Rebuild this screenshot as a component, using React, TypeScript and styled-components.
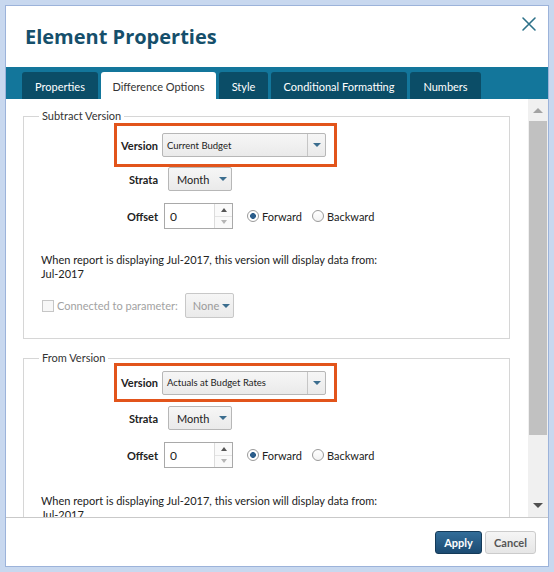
import React from 'react'
import styled, { createGlobalStyle } from 'styled-components'

const GlobalStyle = createGlobalStyle`
  html, body {
    margin: 0;
    padding: 0;
  }
  body {
    background: #c8d8ef;
    font-family: Lato, 'Open Sans', sans-serif;
    font-size: 11px;
    color: #222;
  }
`

const Dialog = styled.div`
  box-sizing: border-box;
  margin: 5px;
  width: 544px;
  height: 562px;
  border: 1px solid #9cb3da;
  background: #fff;
  display: flex;
  flex-direction: column;
`

const Header = styled.div`
  height: 61px;
  flex: none;
  display: flex;
  justify-content: space-between;
  align-items: flex-start;
  padding: 0 11px 0 19px;
`

const Title = styled.h1`
  margin: 0;
  padding-top: 17px;
  font: 700 20px/28px 'Open Sans', sans-serif;
  color: #154f6b;
`

const CloseButton = styled.button`
  margin-top: 10px;
  padding: 0;
  width: 16px;
  height: 16px;
  border: 0;
  background: none;
  color: #2d7189;
  display: flex;
`

const TabBar = styled.div`
  height: 32px;
  flex: none;
  box-sizing: border-box;
  background: #13769b;
  display: flex;
  align-items: flex-end;
  gap: 3px;
  padding-left: 16px;
`

const Tab = styled.div<{ $w: number; $active?: boolean }>`
  width: ${(p) => p.$w}px;
  height: 27px;
  padding-top: 1px;
  box-sizing: border-box;
  display: flex;
  align-items: center;
  justify-content: center;
  border-radius: 3px 3px 0 0;
  background: ${(p) => (p.$active ? '#fff' : '#0b4d67')};
  color: ${(p) => (p.$active ? '#333' : '#fff')};
  font-size: 11px;
`

const Body = styled.div`
  height: 418px;
  flex: none;
  display: flex;
  border-bottom: 1px solid #c9c9c9;
`

const Scroller = styled.div`
  flex: 1;
  overflow: hidden;
  padding: 10px 18px 0 17px;
`

const Group = styled.fieldset`
  margin: 0 0 12px;
  padding: 0 15px 20px;
  border: 1px solid #d6d6d6;
  min-width: 0;
`

const Legend = styled.legend`
  padding: 0 3px;
  font-size: 11px;
  line-height: 14px;
  color: #333;
`

const Highlight = styled.div<{ $h: number; $top?: number }>`
  box-sizing: border-box;
  width: 223px;
  height: ${(p) => p.$h}px;
  margin: ${(p) => p.$top ?? 0}px 0 0 75px;
  border: 3px solid #e2541b;
  display: flex;
  align-items: center;
  gap: 4px;
`

const Row = styled.div<{ $top?: number; $gap: number }>`
  display: flex;
  align-items: center;
  gap: ${(p) => p.$gap}px;
  margin-top: ${(p) => p.$top ?? 0}px;
`

const Label = styled.span<{ $w: number }>`
  width: ${(p) => p.$w}px;
  flex: none;
  text-align: right;
  font-weight: 700;
  color: #222;
`

const Select = styled.div<{ $w: number; $h: number; $disabled?: boolean }>`
  box-sizing: border-box;
  width: ${(p) => p.$w}px;
  height: ${(p) => p.$h}px;
  flex: none;
  display: flex;
  align-items: center;
  border: 1px solid ${(p) => (p.$disabled ? '#c8c8c8' : '#b7b7b7')};
  border-radius: 2px;
  background: linear-gradient(#f6f6f6, #eaeaea);
  color: ${(p) => (p.$disabled ? '#9a9a9a' : '#222')};
`

const SelectText = styled.span<{ $pad: number; $size?: number }>`
  flex: 1;
  padding-left: ${(p) => p.$pad}px;
  font-size: ${(p) => p.$size ?? 11}px;
  white-space: nowrap;
`

const Caret = styled.span<{ $split?: boolean }>`
  width: 17px;
  align-self: stretch;
  display: flex;
  align-items: center;
  justify-content: center;
  border-left: ${(p) => (p.$split ? '1px solid #c6c6c6' : '0')};

  &::after {
    content: '';
    border-left: 4px solid transparent;
    border-right: 4px solid transparent;
    border-top: 4px solid #3b6d8e;
  }
`

const NumberBox = styled.div`
  box-sizing: border-box;
  width: 69px;
  height: 26px;
  flex: none;
  display: flex;
  border: 1px solid #a9a9a9;
  background: #fff;
`

const NumberValue = styled.span`
  flex: 1;
  align-self: center;
  padding-left: 5px;
  font-size: 12px;
  color: #222;
`

const Spinner = styled.div`
  width: 17px;
  display: flex;
  flex-direction: column;
  border-left: 1px solid #dcdcdc;
`

const SpinButton = styled.span<{ $down?: boolean }>`
  flex: 1;
  display: flex;
  align-items: center;
  justify-content: center;
  background: #fafafa;
  border-top: ${(p) => (p.$down ? '1px solid #e4e4e4' : '0')};

  &::after {
    content: '';
    border-left: 3px solid transparent;
    border-right: 3px solid transparent;
    ${(p) =>
      p.$down
        ? 'border-top: 4px solid #b5b5b5;'
        : 'border-bottom: 4px solid #555;'}
  }
`

const RadioGroup = styled.div`
  display: flex;
  align-items: center;
  margin-left: 8px;
`

const RadioOption = styled.label`
  display: flex;
  align-items: center;
  gap: 3px;
  margin-right: 10px;
  font-size: 11px;
  color: #222;
`

const RadioDot = styled.span<{ $checked?: boolean }>`
  box-sizing: border-box;
  width: 12px;
  height: 12px;
  border-radius: 50%;
  border: 1px solid #9a9a9a;
  background: ${(p) =>
    p.$checked
      ? 'radial-gradient(circle, #2b5d8b 0 2.6px, #fff 3.2px)'
      : 'linear-gradient(#fff, #f2f2f2)'};
`

const Note = styled.p<{ $top: number }>`
  margin: ${(p) => p.$top}px 0 0 2px;
  font-size: 11px;
  line-height: 14px;
  color: #222;
`

const ParamRow = styled.div`
  display: flex;
  align-items: center;
  margin: 12px 0 0 3px;
`

const CheckBox = styled.span`
  box-sizing: border-box;
  width: 12px;
  height: 12px;
  border: 1px solid #c6c6c6;
  background: #f7f7f7;
  margin-right: 3px;
`

const MutedText = styled.span`
  color: #a2a2a2;
  font-size: 11px;
  margin-right: 7px;
`

const Scrollbar = styled.div`
  width: 20px;
  flex: none;
  background: #f0f0f0;
  display: flex;
  flex-direction: column;
`

const ScrollArrow = styled.span<{ $down?: boolean }>`
  height: ${(p) => (p.$down ? 24 : 22)}px;
  display: flex;
  align-items: center;
  justify-content: center;
  margin-top: ${(p) => (p.$down ? 'auto' : '0')};

  &::after {
    content: '';
    border-left: 5px solid transparent;
    border-right: 5px solid transparent;
    ${(p) =>
      p.$down
        ? 'border-top: 5px solid #505050;'
        : 'border-bottom: 5px solid #a3a3a3;'}
  }
`

const ScrollThumb = styled.div`
  height: 314px;
  margin: 0 1px;
  background: #c1c1c1;
`

const Footer = styled.div`
  flex: 1;
  display: flex;
  align-items: center;
  justify-content: flex-end;
  gap: 3px;
  padding-right: 12px;
`

const Button = styled.button<{ $primary?: boolean; $w: number }>`
  box-sizing: border-box;
  width: ${(p) => p.$w}px;
  height: 23px;
  padding: 0;
  border-radius: 3px;
  font: 700 11px Lato, 'Open Sans', sans-serif;
  border: 1px solid ${(p) => (p.$primary ? '#143a58' : '#cbcbcb')};
  background: ${(p) =>
    p.$primary
      ? 'linear-gradient(#326d99, #1c4b72)'
      : 'linear-gradient(#f5f5f5, #e6e6e6)'};
  color: ${(p) => (p.$primary ? '#fff' : '#555')};
`

const tabs = [
  { name: 'Properties', w: 76 },
  { name: 'Difference Options', w: 115, active: true },
  { name: 'Style', w: 49 },
  { name: 'Conditional Formatting', w: 136 },
  { name: 'Numbers', w: 71 },
]

type VersionGroupProps = {
  legend: string
  version: string
  boxHeight: number
  boxTop?: number
  strataTop: number
  offsetTop: number
  noteTop: number
  showParam?: boolean
}

const VersionGroup = ({
  legend,
  version,
  boxHeight,
  boxTop,
  strataTop,
  offsetTop,
  noteTop,
  showParam,
}: VersionGroupProps) => (
  <Group>
    <Legend>{legend}</Legend>
    <Highlight $h={boxHeight} $top={boxTop}>
      <Label $w={41}>Version</Label>
      <Select $w={164} $h={24}>
        <SelectText $pad={4} $size={9.5}>
          {version}
        </SelectText>
        <Caret $split />
      </Select>
    </Highlight>
    <Row $gap={10} $top={strataTop}>
      <Label $w={119}>Strata</Label>
      <Select $w={64} $h={24}>
        <SelectText $pad={8}>Month</SelectText>
        <Caret />
      </Select>
    </Row>
    <Row $gap={6} $top={offsetTop}>
      <Label $w={119}>Offset</Label>
      <NumberBox>
        <NumberValue>0</NumberValue>
        <Spinner>
          <SpinButton />
          <SpinButton $down />
        </Spinner>
      </NumberBox>
      <RadioGroup>
        <RadioOption>
          <RadioDot $checked />
          Forward
        </RadioOption>
        <RadioOption>
          <RadioDot />
          Backward
        </RadioOption>
      </RadioGroup>
    </Row>
    <Note $top={noteTop}>
      When report is displaying Jul-2017, this version will display data from:
      <br />
      Jul-2017
    </Note>
    {showParam && (
      <ParamRow>
        <CheckBox />
        <MutedText>Connected to parameter:</MutedText>
        <Select $w={49} $h={25} $disabled>
          <SelectText $pad={7}>None</SelectText>
          <Caret />
        </Select>
      </ParamRow>
    )}
  </Group>
)

const App = () => (
  <>
    <GlobalStyle />
    <Dialog>
      <Header>
        <Title>Element Properties</Title>
        <CloseButton aria-label='Close'>
          <svg width='16' height='16' viewBox='0 0 16 16'>
            <path
              d='M2 2 L14 14 M14 2 L2 14'
              stroke='currentColor'
              strokeWidth='1.6'
              strokeLinecap='round'
            />
          </svg>
        </CloseButton>
      </Header>
      <TabBar>
        {tabs.map((t) => (
          <Tab key={t.name} $w={t.w} $active={t.active}>
            {t.name}
          </Tab>
        ))}
      </TabBar>
      <Body>
        <Scroller>
          <VersionGroup
            legend='Subtract Version'
            version='Current Budget'
            boxHeight={44}
            strataTop={0}
            offsetTop={12}
            noteTop={24}
            showParam
          />
          <VersionGroup
            legend='From Version'
            version='Actuals at Budget Rates'
            boxHeight={39}
            boxTop={-2}
            strataTop={4}
            offsetTop={12}
            noteTop={26}
          />
        </Scroller>
        <Scrollbar>
          <ScrollArrow />
          <ScrollThumb />
          <ScrollArrow $down />
        </Scrollbar>
      </Body>
      <Footer>
        <Button $primary $w={47}>
          Apply
        </Button>
        <Button $w={51}>Cancel</Button>
      </Footer>
    </Dialog>
  </>
)

export default App
